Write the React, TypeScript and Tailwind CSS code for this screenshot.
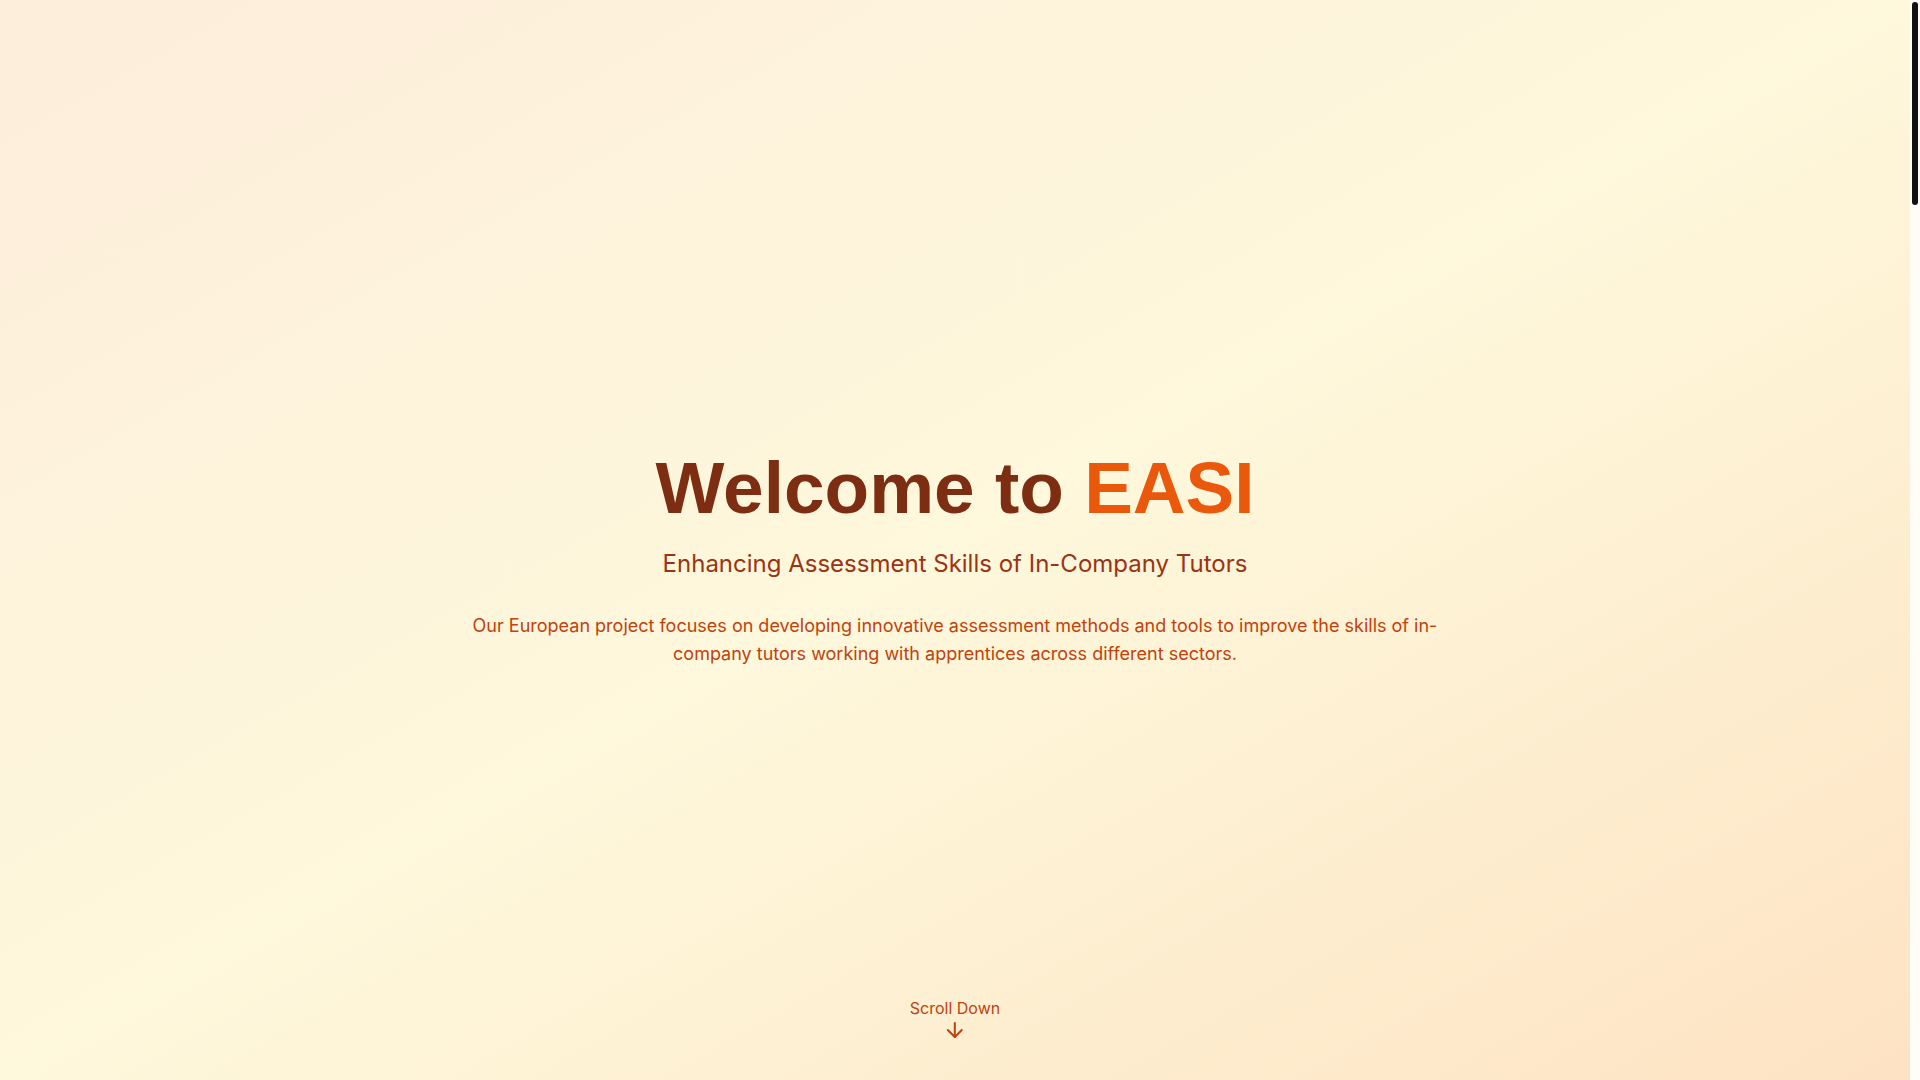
import { ArrowDown } from 'lucide-react';

export default function App() {
  return (
    <div
      className="h-screen flex overflow-hidden bg-[#fffbeb]"
      style={{ fontFamily: 'Inter, "Noto Sans", sans-serif' }}
    >
      <main className="flex-1 min-w-0">
        {/* Hero */}
        <section className="relative h-screen flex items-center justify-center bg-gradient-to-br from-[#fdeddb] via-[#fef8dc] to-[#fde3c3] px-4 pt-[39px]">
          <div className="max-w-5xl w-full mx-auto text-center px-4">
            <h1 className="text-[73px] font-bold leading-none mb-6 text-[#7c2d12] font-['Liberation_Sans',Arial,sans-serif]">
              Welcome to <span className="text-[#ea580c]">EASI</span>
            </h1>
            <p className="text-2xl text-[#9a3412] mb-8">
              Enhancing Assessment Skills of In-Company Tutors
            </p>
            <p className="text-lg text-[#c2410c]">
              Our European project focuses on developing innovative assessment methods and tools to improve the skills of in-company tutors working with apprentices across different sectors.
            </p>
          </div>

          <div className="absolute bottom-[38px] left-1/2 -translate-x-1/2 flex flex-col items-center text-[#c2410c]">
            <span className="text-base">Scroll Down</span>
            <ArrowDown className="w-6 h-6 -mt-0.5" strokeWidth={2} />
          </div>
        </section>
      </main>

      {/* page scrollbar */}
      <aside className="w-2.5 shrink-0 bg-[#fffdf6] px-0.5 pt-0.5">
        <div className="h-[203px] w-full rounded-full bg-[#111111]" />
      </aside>
    </div>
  );
}
